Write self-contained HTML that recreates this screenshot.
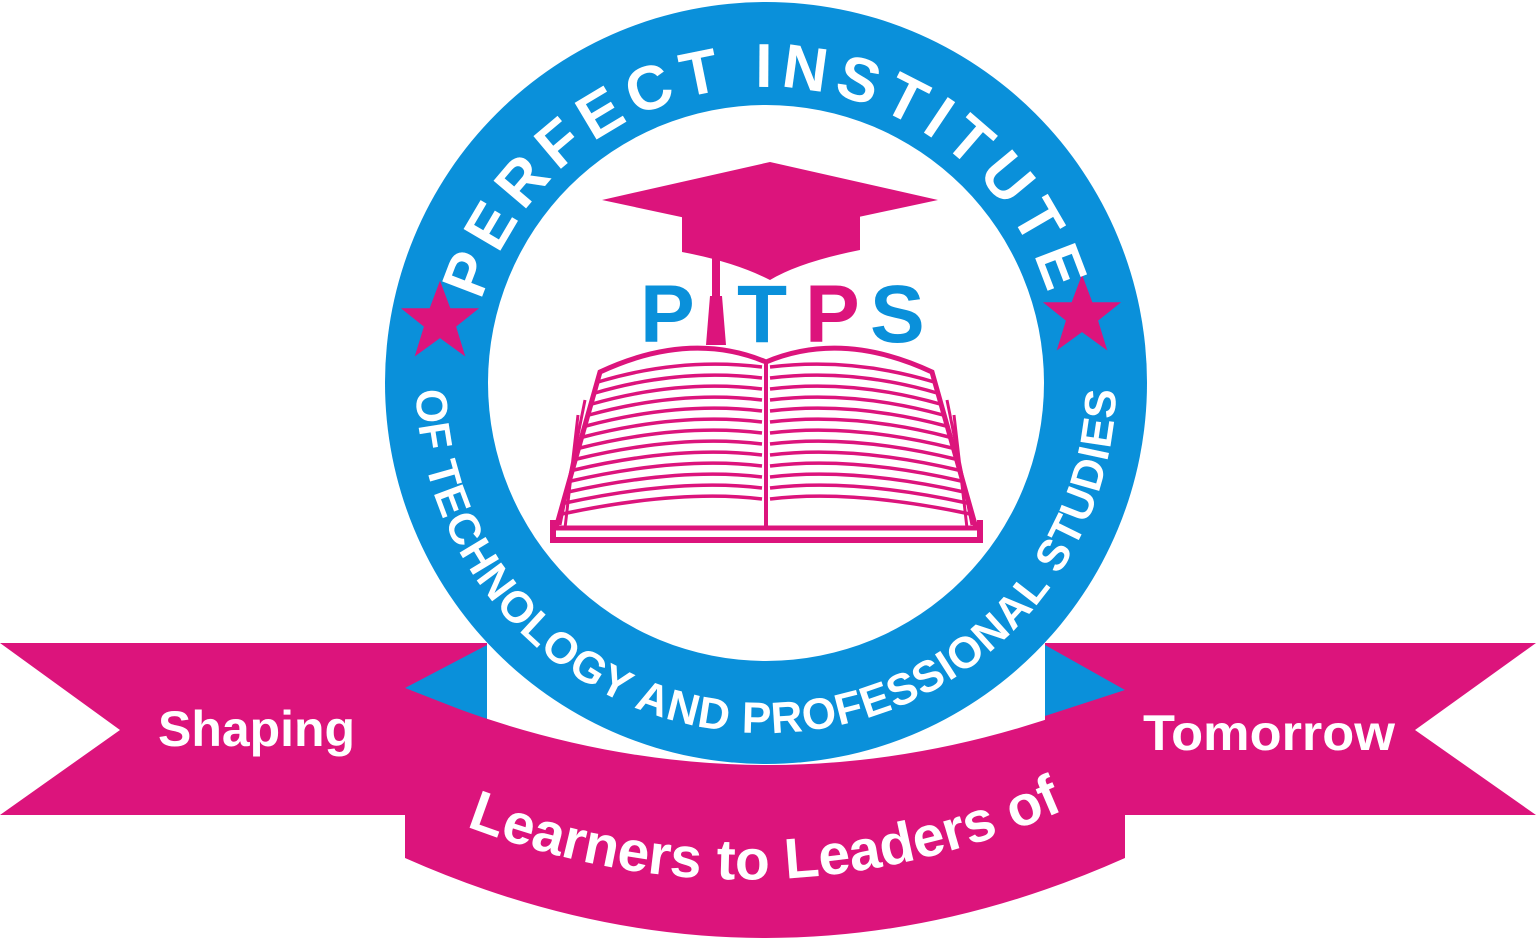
<!DOCTYPE html>
<html><head><style>
html,body{margin:0;padding:0;background:#fff;}
svg{display:block;}
</style></head><body>
<svg width="1536" height="939" viewBox="0 0 1536 939" xmlns="http://www.w3.org/2000/svg">
<defs>
<path id="topArc" d="M 470 383 A 296 296 0 0 1 1062 383"/>
<path id="botArc" d="M 416 383 A 350 350 0 0 0 1116 383"/>
<path id="banArc" d="M 455 822 Q 766 945 1075 805"/>
</defs>
<polygon points="0,643 487,643 487,815 0,815 120,730" fill="#dc147c"/>
<polygon points="1045,643 1536,643 1415,730 1536,815 1045,815" fill="#dc147c"/>
<circle cx="766" cy="383" r="381" fill="#0a90da"/>
<circle cx="766" cy="383" r="278" fill="#fff"/>
<polygon points="405,688 487,645 487,720" fill="#0a90da"/>
<polygon points="1045,645 1125,690 1045,716" fill="#0a90da"/>
<path d="M405 688 Q766 841 1125 690 L1125 858 Q766 1018 405 858 Z" fill="#dc147c"/>
<g fill="#dc147c">
<polygon transform="translate(440,322) scale(1.15)" points="0,-36 9,-12 34,-12 14,4 22,30 0,14 -22,30 -14,4 -34,-12 -9,-12"/>
<polygon transform="translate(1082,316) scale(1.15)" points="0,-36 9,-12 34,-12 14,4 22,30 0,14 -22,30 -14,4 -34,-12 -9,-12"/>
</g>
<text font-family="Liberation Sans, sans-serif" font-weight="bold" font-size="62" fill="#fff" letter-spacing="8"><textPath href="#topArc" startOffset="50%" text-anchor="middle">PERFECT INSTITUTE</textPath></text>
<text font-family="Liberation Sans, sans-serif" font-weight="bold" font-size="44" fill="#fff"><textPath href="#botArc" startOffset="50%" text-anchor="middle" textLength="1085" lengthAdjust="spacing">OF TECHNOLOGY AND PROFESSIONAL STUDIES</textPath></text>
<g fill="#dc147c">
<polygon points="602,200 770,162 938,200 770,236"/>
<path d="M682 215 L860 215 L860 250 Q800 262 770 280 Q735 262 682 252 Z"/>
<rect x="712" y="258" width="8" height="40"/>
<path d="M710 296 L722 296 L726 345 L706 345 Z"/>
</g>
<text x="640" y="342" font-family="Liberation Sans, sans-serif" font-weight="bold" font-size="82" fill="#0a90da">P</text>
<text x="737" y="342" font-family="Liberation Sans, sans-serif" font-weight="bold" font-size="82" fill="#0a90da">T</text>
<text x="805" y="342" font-family="Liberation Sans, sans-serif" font-weight="bold" font-size="82" fill="#dc147c">P</text>
<text x="870" y="342" font-family="Liberation Sans, sans-serif" font-weight="bold" font-size="82" fill="#0a90da">S</text>
<g fill="none" stroke="#dc147c" stroke-width="4">
<path d="M553 520 L553 540 L980 540 L980 520" stroke-width="6"/>
<path d="M600 372 Q690 330 766 362 Q842 330 932 372 L976 528 L556 528 Z" stroke-width="5"/>
<line x1="766" y1="362" x2="766" y2="526"/>
<path d="M585 400 L560 525 M578 415 L565 528 M947 400 L972 525 M954 415 L967 528" stroke-width="3"/>
</g>
<g fill="none" stroke="#dc147c" stroke-width="3.5">
<path d="M598 382 Q680 357 762 367"/>
<path d="M595 393 Q680 368 762 378"/>
<path d="M592 404 Q680 379 762 389"/>
<path d="M589 415 Q680 390 762 400"/>
<path d="M586 426 Q680 401 762 411"/>
<path d="M583 437 Q680 412 762 422"/>
<path d="M580 448 Q680 423 762 433"/>
<path d="M577 459 Q680 434 762 444"/>
<path d="M574 470 Q680 445 762 455"/>
<path d="M571 481 Q680 456 762 466"/>
<path d="M568 492 Q680 467 762 477"/>
<path d="M565 503 Q680 478 762 488"/>
<path d="M562 514 Q680 489 762 499"/>
<path d="M934 382 Q852 357 770 367"/>
<path d="M937 393 Q852 368 770 378"/>
<path d="M940 404 Q852 379 770 389"/>
<path d="M943 415 Q852 390 770 400"/>
<path d="M946 426 Q852 401 770 411"/>
<path d="M949 437 Q852 412 770 422"/>
<path d="M952 448 Q852 423 770 433"/>
<path d="M955 459 Q852 434 770 444"/>
<path d="M958 470 Q852 445 770 455"/>
<path d="M961 481 Q852 456 770 466"/>
<path d="M964 492 Q852 467 770 477"/>
<path d="M967 503 Q852 478 770 488"/>
<path d="M970 514 Q852 489 770 499"/>
</g>
<text x="158" y="746" font-family="Liberation Sans, sans-serif" font-weight="bold" font-size="50" fill="#fff" textLength="197" lengthAdjust="spacingAndGlyphs">Shaping</text>
<text x="1143" y="750" font-family="Liberation Sans, sans-serif" font-weight="bold" font-size="50" fill="#fff" textLength="252" lengthAdjust="spacingAndGlyphs">Tomorrow</text>
<text font-family="Liberation Sans, sans-serif" font-weight="bold" font-size="57" fill="#fff"><textPath href="#banArc" startOffset="50%" text-anchor="middle">Learners to Leaders of</textPath></text>
</svg>
</body></html>
